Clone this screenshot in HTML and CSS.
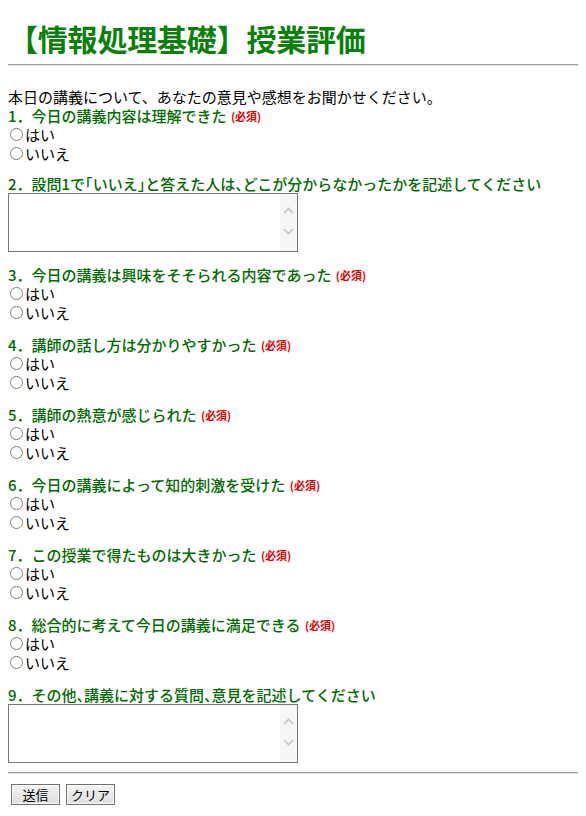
FILE: index.html
```html
<!DOCTYPE html>
<html lang="ja">
<head>
<meta charset="utf-8">
<title>【情報処理基礎】授業評価</title>
<link rel="stylesheet" href="styles.css">
</head>
<body>
<h1 class="title">【情報処理基礎】授業評価</h1>
<hr class="rule">
<form class="survey">
  <p class="intro">本日の講義について、あなたの意見や感想をお聞かせください。</p>

  <div class="q q-first">
    <div class="q-title">1．今日の講義内容は理解できた <span class="req">(必須)</span></div>
    <label class="opt"><input class="radio" type="radio" name="q1">はい</label>
    <label class="opt"><input class="radio" type="radio" name="q1">いいえ</label>
  </div>

  <div class="q">
    <div class="q-title">2．設問1で<span class="br">「</span>いいえ<span class="br">」</span>と答えた人は<span class="br">、</span>どこが分からなかったかを記述してください</div>
    <div class="textbox">
      <textarea class="text"></textarea>
      <div class="scroll">
        <svg class="chev" width="11" height="7" viewBox="0 0 11 7"><path d="M1 6 L5.5 1.5 L10 6" fill="none" stroke="#c4c4c4" stroke-width="1.6"/></svg>
        <svg class="chev" width="11" height="7" viewBox="0 0 11 7"><path d="M1 1 L5.5 5.5 L10 1" fill="none" stroke="#c4c4c4" stroke-width="1.6"/></svg>
      </div>
    </div>
  </div>

  <div class="q">
    <div class="q-title">3．今日の講義は興味をそそられる内容であった <span class="req">(必須)</span></div>
    <label class="opt"><input class="radio" type="radio" name="q3">はい</label>
    <label class="opt"><input class="radio" type="radio" name="q3">いいえ</label>
  </div>

  <div class="q">
    <div class="q-title">4．講師の話し方は分かりやすかった <span class="req">(必須)</span></div>
    <label class="opt"><input class="radio" type="radio" name="q4">はい</label>
    <label class="opt"><input class="radio" type="radio" name="q4">いいえ</label>
  </div>

  <div class="q">
    <div class="q-title">5．講師の熱意が感じられた <span class="req">(必須)</span></div>
    <label class="opt"><input class="radio" type="radio" name="q5">はい</label>
    <label class="opt"><input class="radio" type="radio" name="q5">いいえ</label>
  </div>

  <div class="q">
    <div class="q-title">6．今日の講義によって知的刺激を受けた <span class="req">(必須)</span></div>
    <label class="opt"><input class="radio" type="radio" name="q6">はい</label>
    <label class="opt"><input class="radio" type="radio" name="q6">いいえ</label>
  </div>

  <div class="q">
    <div class="q-title">7．この授業で得たものは大きかった <span class="req">(必須)</span></div>
    <label class="opt"><input class="radio" type="radio" name="q7">はい</label>
    <label class="opt"><input class="radio" type="radio" name="q7">いいえ</label>
  </div>

  <div class="q">
    <div class="q-title">8．総合的に考えて今日の講義に満足できる <span class="req">(必須)</span></div>
    <label class="opt"><input class="radio" type="radio" name="q8">はい</label>
    <label class="opt"><input class="radio" type="radio" name="q8">いいえ</label>
  </div>

  <div class="q q-last">
    <div class="q-title">9．その他<span class="br">、</span>講義に対する質問<span class="br">、</span>意見を記述してください</div>
    <div class="textbox">
      <textarea class="text"></textarea>
      <div class="scroll">
        <svg class="chev" width="11" height="7" viewBox="0 0 11 7"><path d="M1 6 L5.5 1.5 L10 6" fill="none" stroke="#c4c4c4" stroke-width="1.6"/></svg>
        <svg class="chev" width="11" height="7" viewBox="0 0 11 7"><path d="M1 1 L5.5 5.5 L10 1" fill="none" stroke="#c4c4c4" stroke-width="1.6"/></svg>
      </div>
    </div>
  </div>

  <hr class="rule rule-bottom">
  <div class="buttons">
    <button class="btn" type="submit">送信</button>
    <button class="btn" type="reset">クリア</button>
  </div>
</form>
</body>
</html>
```

FILE: styles.css
```css
html, body {
  margin: 0;
  padding: 0;
  background: #ffffff;
}

body {
  padding: 0 8px;
  font-family: "Noto Sans CJK JP", "DejaVu Sans", sans-serif;
  font-size: 15px;
  color: #000000;
}

.title {
  margin: 0;
  padding-top: 20px;
  font-size: 30px;
  line-height: 36px;
  font-weight: bold;
  color: #0a800a;
  letter-spacing: -0.2px;
}

.rule {
  margin: 8px 0 0;
  height: 0;
  border: 0;
  border-top: 1px solid #9c9c9c;
  border-bottom: 1px solid #e4e4e4;
}

.survey {
  margin: 0;
}

.intro {
  margin: 21px 0 0;
  line-height: 19px;
}

.q {
  display: flex;
  flex-direction: column;
  align-items: flex-start;
  margin-bottom: 14px;
}

.q-first {
  padding-top: 1px;
  margin-bottom: 12px;
}

.q-last {
  margin-bottom: 0;
}

.q-title {
  line-height: 18px;
  font-weight: 500;
  color: #006a00;
  white-space: nowrap;
}

.br {
  font-feature-settings: "halt";
}

.req {
  margin-left: 1px;
  font-size: 11px;
  color: #e00000;
  font-weight: bold;
  vertical-align: 1px;
}

.opt {
  display: flex;
  align-items: center;
  height: 19px;
  line-height: 19px;
  color: #000000;
}

.radio {
  appearance: none;
  -webkit-appearance: none;
  width: 13px;
  height: 13px;
  margin: 0 2px 0 2px;
  border: 1px solid #7c7c7c;
  border-radius: 50%;
  background: #ffffff;
  box-sizing: border-box;
}

.textbox {
  display: flex;
  width: 290px;
  height: 59px;
  box-sizing: border-box;
  border: 1px solid #787878;
  background: #ffffff;
}

.text {
  flex: 1;
  border: 0;
  margin: 0;
  padding: 2px;
  resize: none;
  outline: none;
  font: inherit;
  background: transparent;
}

.scroll {
  width: 17px;
  background: #f6f6f6;
  display: flex;
  flex-direction: column;
  align-items: center;
  justify-content: flex-start;
  padding-top: 13px;
  gap: 14px;
  box-sizing: border-box;
}

.chev {
  display: block;
}

.rule-bottom {
  margin-top: 9px;
}

.buttons {
  display: flex;
  gap: 6px;
  padding-left: 3px;
  margin-top: 10px;
}

.btn {
  width: 49px;
  height: 21px;
  padding: 0;
  margin: 0;
  border: 1px solid #707070;
  border-radius: 0;
  background: linear-gradient(#f4f4f4, #dedede);
  box-shadow: inset 0 0 0 1px #fcfcfc;
  font-family: "Noto Sans CJK JP", "DejaVu Sans", sans-serif;
  font-size: 13px;
  line-height: 19px;
  color: #000000;
}
```
